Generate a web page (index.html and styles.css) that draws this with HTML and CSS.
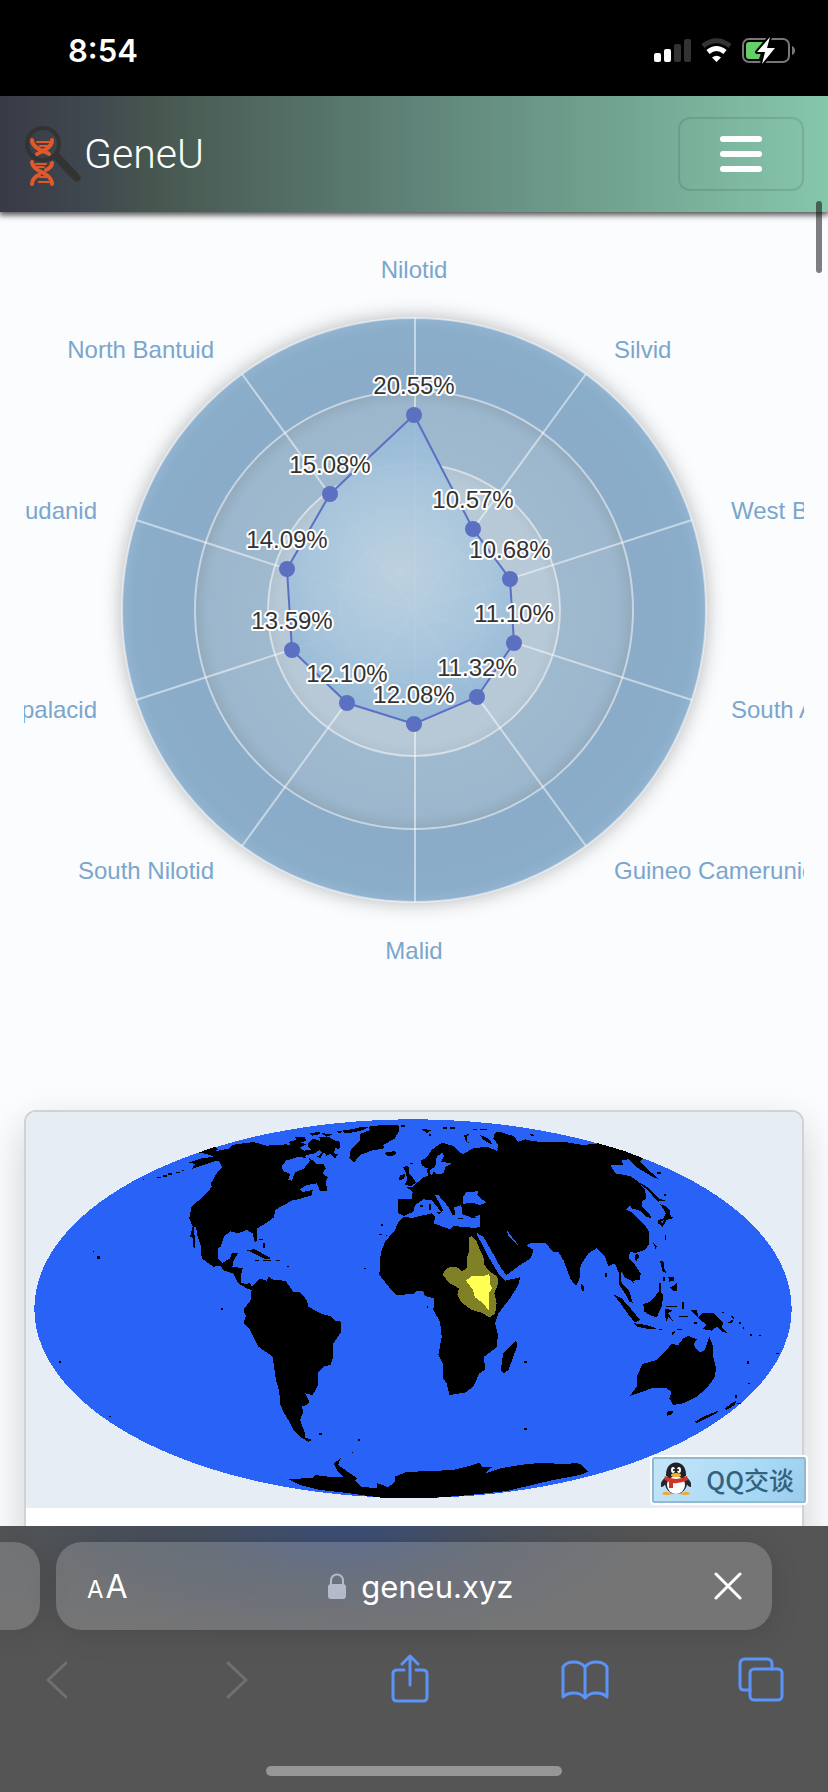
FILE: index.html
```
<!DOCTYPE html>
<html lang="en">
<head>
  <meta charset="UTF-8">
  <meta name="viewport" content="width=device-width, initial-scale=1.0">
  <title>GeneU</title>
  <link rel="stylesheet" href="styles.css">
</head>
<body>
  <div class="status">
    <span class="time">8:54</span>
    <svg class="status-icons" width="144" height="32" viewBox="0 0 144 32">
      <rect x="1" y="20" width="7" height="9" rx="2" fill="#fff"/>
      <rect x="11" y="16" width="7" height="13" rx="2" fill="#fff"/>
      <rect x="21" y="11" width="7" height="18" rx="2" fill="#333"/>
      <rect x="31" y="6" width="7" height="23" rx="2" fill="#333"/>
      <g fill="none" stroke-width="5">
        <path d="M50 13 Q63.500 2.500 77 13" stroke="#333"/>
        <path d="M55 19 Q63.500 12 72 19" stroke="#fff"/>
      </g>
      <path d="M59 24.500 Q63.500 21 68 24.500 L63.500 29Z" fill="#fff"/>
      <rect x="90" y="6" width="46" height="23" rx="6" fill="none" stroke="#777" stroke-width="2"/>
      <path d="M139 13 Q142 14 142 17.500 Q142 21 139 22Z" fill="#777"/>
      <path d="M96 9 H111 L103 20 H108 L106 26 H96 Q93 26 93 23 V12 Q93 9 96 9Z" fill="#65ce66"/>
      <path d="M117 4 L104 19 H112 L109 31 L122 15 H114Z" fill="#fff" stroke="#000" stroke-width="4" paint-order="stroke" stroke-linejoin="round"/>
    </svg>
  </div>

  <header class="navbar">
    <a class="brand" href="#">
      <svg width="58" height="64" viewBox="0 0 58 64">
        <g fill="none" stroke="#e0592b" stroke-width="4" stroke-linecap="round">
          <path d="M8 18 C8 28 25 30 25 32 M28 18 C28 27 17 29 13 32"/>
          <path d="M13 20 H27 M16 24 H24" stroke-width="2"/>
          <path d="M8 40 C9 51 28 50 28 62 M28 41 C28 45 24 47 22 48 M8 62 C8 57 12 54 15 53"/>
          <path d="M12 42 H22 M13 45 H20 M16 55 H23 M15 60 H25" stroke-width="2"/>
        </g>
        <circle cx="19" cy="22" r="16" fill="none" stroke="#333" stroke-width="4"/>
        <path d="M31 33 L52 55" stroke="#333" stroke-width="8"/>
        <path d="M51 54 L53 56" stroke="#333" stroke-width="7" stroke-linecap="round"/>
      </svg>
      <span>GeneU</span>
    </a>
    <button class="toggler" type="button" aria-label="Menu"><i></i><i></i><i></i></button>
  </header>

  <main class="content">
    <svg class="radar" viewBox="0 0 780 800">
      <defs>
        <radialGradient id="rings" gradientUnits="userSpaceOnUse" cx="390" cy="398" r="292">
          <stop offset="0" stop-color="#b9c9d8"/>
          <stop offset=".46" stop-color="#b7c8d7"/>
          <stop offset=".5" stop-color="#b0c1d0"/>
          <stop offset=".5" stop-color="#9fb9ce"/>
          <stop offset=".7" stop-color="#9cb7cd"/>
          <stop offset=".75" stop-color="#92aabd"/>
          <stop offset=".75" stop-color="#8bacc9"/>
          <stop offset=".96" stop-color="#8aadca"/>
          <stop offset="1" stop-color="#93b4d1"/>
        </radialGradient>
        <radialGradient id="area" gradientUnits="userSpaceOnUse" cx="376" cy="358" r="170">
          <stop offset="0" stop-color="#bed2e0"/>
          <stop offset=".5" stop-color="#a8c6dd"/>
          <stop offset="1" stop-color="#8fb4d4"/>
        </radialGradient>
      </defs>
      <circle class="disc" cx="390" cy="398" r="292" fill="url(#rings)"/>
      <g class="grid">
        <circle cx="390" cy="398" r="292"/>
        <circle cx="390" cy="398" r="219"/>
        <circle cx="390" cy="398" r="146"/>
        <circle cx="390" cy="398" r="73"/>
        <path d="M391 106V690 M218 162L562 634 M562 162L218 634 M112 308L668 488 M668 308L112 488"/>
      </g>
      <polygon points="390,203 306,282 263,357 268,438 323,491 390,512 453,485 490,431 486,367 449,317" fill="url(#area)" fill-opacity=".93" stroke="#5b70c4" stroke-width="2"/>
      <g fill="#5b70c0">
        <circle cx="390" cy="203" r="8"/>
        <circle cx="306" cy="282" r="8"/>
        <circle cx="263" cy="357" r="8"/>
        <circle cx="268" cy="438" r="8"/>
        <circle cx="323" cy="491" r="8"/>
        <circle cx="390" cy="512" r="8"/>
        <circle cx="453" cy="485" r="8"/>
        <circle cx="490" cy="431" r="8"/>
        <circle cx="486" cy="367" r="8"/>
        <circle cx="449" cy="317" r="8"/>
      </g>
      <g class="values">
        <text x="390" y="182">20.55%</text>
        <text x="306" y="261">15.08%</text>
        <text x="263" y="336">14.09%</text>
        <text x="268" y="417">13.59%</text>
        <text x="323" y="470">12.10%</text>
        <text x="390" y="491">12.08%</text>
        <text x="453" y="464">11.32%</text>
        <text x="490" y="410">11.10%</text>
        <text x="486" y="346">10.68%</text>
        <text x="449" y="296">10.57%</text>
      </g>
      <g class="names">
        <text x="390" y="66" class="mid">Nilotid</text>
        <text x="190" y="146" class="end">North Bantuid</text>
        <text x="73" y="307" class="end">Sudanid</text>
        <text x="73" y="506" class="end">palacid</text>
        <text x="190" y="667" class="end">South Nilotid</text>
        <text x="390" y="747" class="mid">Malid</text>
        <text x="590" y="667">Guineo Camerunid</text>
        <text x="707" y="506">South Africid</text>
        <text x="707" y="307">West Bantuid</text>
        <text x="590" y="146">Silvid</text>
      </g>
    </svg>

    <div class="card">
      <svg class="map" viewBox="78 66 2328 1188">
        <ellipse cx="1239" cy="656" rx="1136" ry="568" fill="#2962f6"/>
        <!-- Americas -->
        <path d="M595,188 645,170 655,178 640,185 685,176 700,164 760,156 800,167 860,163 900,172 920,190 915,202 930,205 950,222 970,222 977,236 968,250 983,262 978,275 981,303 960,302 950,280 920,285 900,298 908,306 938,300 935,316 905,325 875,332 825,360 822,382 800,398 772,415 772,450 765,458 758,430 740,420 715,430 690,424 672,440 662,470 654,475 655,508 668,518 690,505 695,490 713,490 700,515 697,530 728,535 722,560 722,578 740,583 750,578 755,590 780,565 800,572 805,560 820,570 855,572 870,590 880,607 900,606 920,630 925,650 960,670 995,680 1005,692 1022,695 1022,728 1000,760 1000,800 992,825 970,830 955,848 955,885 938,915 915,910 928,935 920,945 905,950 910,965 900,990 915,1030 915,1042 938,1050 925,1055 900,1040 880,1020 865,990 850,965 840,940 838,905 828,870 818,800 775,770 750,720 730,700 738,678 730,660 752,630 755,600 738,594 715,580 700,550 672,542 662,528 640,530 605,505 602,465 592,435 588,412 582,412 586,475 578,470 580,445 570,440 578,410 568,385 575,350 620,310 635,290 633,280 650,250 668,232 655,212 640,215 600,228 575,237 585,222 565,218 600,206 640,200 622,192Z"/>
        <path d="M845,230 858,212 890,202 925,203 930,212 912,235 885,248 875,272 865,270 870,252 850,243Z" fill="#2962f6"/>
        <path d="M735,480 765,478 790,492 815,505 795,507 770,495 750,485Z M765,510h12v3h-12Z M790,510h22v4h-22Z M828,510h12v4h-12Z M776,447h12v3h-12Z M790,460h4v14h-4Z M292,499h8v8h-8Z M278,482h5v4h-5Z M664,653h5v7h-5Z M178,813h5v6h-5Z M328,978h5v4h-5Z M470,260h12v3h-12Z M490,256h10v4h-10Z M505,250h10v4h-10Z M527,245h12v4h-12Z M545,241h8v3h-8Z M428,266h5v4h-5Z M862,527h4v5h-4Z M956,1028 970,1032 958,1036Z M1073,1046h7v7h-7Z M1055,1086h4v3h-4Z"/>
        <g transform="translate(840)">
          <!-- Arctic islands, Greenland, Iceland -->
          <path d="M28,155 50,150 45,142 75,140 78,152 62,158 80,162 60,172 30,166Z M85,160 100,146 120,152 118,140 150,142 160,150 180,155 178,180 168,172 160,190 175,192 165,205 150,192 140,198 132,186 120,205 112,200 125,188 118,180 105,190 80,195 75,180 95,180 85,170Z M90,130 120,125 118,133 95,137Z M125,130 160,132 140,140Z M165,122 185,124 180,130Z M185,122 215,118 240,112 265,112 250,120 215,128 195,130Z M10,170 60,175 70,195 30,205 0,200Z"/>
          <path d="M208,205 212,180 240,150 240,132 270,120 265,110 300,106 355,104 357,122 345,145 310,165 312,175 275,182 240,195 222,218Z M315,188 345,183 350,192 330,200 318,195Z M425,117 455,120 440,130Z M362,106h12v5h-12Z M490,112h12v4h-12Z M510,112h14v4h-14Z M580,116h12v4h-12Z M600,118h20v3h-20Z M446,132h6v6h-6Z"/>
          <path d="M552,135 570,132 560,140 562,155 570,160 558,156Z M600,135 625,145 640,165 625,158 608,148Z M750,133 780,135 755,137Z M370,232 385,226 388,250 400,265 408,278 395,287 372,286 382,270 378,250Z M355,270 362,255 376,252 371,268Z M390,218h8v5h-8Z"/>
          <!-- Eurasia -->
          <path d="M355,328 395,326 398,305 380,292 400,290 412,278 430,262 445,258 440,240 448,232 440,235 425,225 422,212 440,202 455,180 485,158 520,168 540,188 550,192 580,175 620,170 650,182 655,165 640,145 645,128 660,126 700,138 715,155 735,148 760,154 800,156 860,157 910,165 955,160 1030,182 1090,205 1080,215 1100,235 1138,268 1120,262 1075,235 1060,222 1045,208 1025,212 1030,224 992,225 1005,250 1050,258 1075,275 1095,300 1100,325 1085,335 1085,350 1110,375 1116,385 1100,380 1080,362 1055,355 1050,345 1038,358 1060,370 1072,385 1095,405 1108,428 1108,460 1095,480 1070,488 1050,487 1045,505 1065,525 1082,550 1080,570 1060,572 1062,582 1055,572 1035,562 1025,545 1022,548 1025,580 1048,603 1058,638 1048,635 1032,605 1018,585 1017,550 1005,520 985,528 975,500 950,475 925,490 902,525 898,570 888,588 872,568 850,510 835,485 820,485 795,458 750,460 738,466 715,465 695,440 680,420 686,440 712,465 735,462 760,480 752,505 720,525 680,555 665,538 640,492 610,440 592,430 590,412 600,412 600,375 575,382 545,372 545,350 520,350 530,372 518,375 505,350 475,315 465,315 490,360 485,368 455,330 430,328 405,345 400,365 372,378 355,370Z"/>
          <path d="M452,238 466,230 470,200 488,188 492,200 483,215 515,220 495,232 492,250 470,252 462,245 455,256 448,250Z M548,320 560,306 595,304 592,315 618,338 600,345 575,338 548,342Z M522,352 545,345 540,360 550,380 530,385 526,370Z M625,165 655,180 640,162Z" fill="#2962f6"/>
          <path d="M470,365 485,367 478,374Z M446,343h8v16h-8Z M535,384h14v3h-14Z M573,380h14v4h-14Z M420,346h8v4h-8Z"/>
          <!-- Africa -->
          <path d="M370,382 400,383 455,370 465,380 462,400 510,418 520,408 565,412 592,415 590,434 605,460 625,500 655,550 675,572 720,562 715,585 690,625 655,670 645,700 653,730 652,770 612,800 615,840 598,850 580,890 555,908 508,915 500,880 490,865 488,820 475,795 485,740 480,695 460,660 463,625 435,618 430,603 408,603 400,612 350,615 330,595 298,555 302,490 315,455 345,420 355,395Z M708,750 712,768 700,800 685,840 670,850 662,840 670,790 690,770Z M733,1014h7v7h-7Z M733,813h7v5h-7Z M440,648h4v5h-4Z M297,432h8v3h-8Z M304,403h4v4h-4Z M253,533h5v5h-5Z M318,435h4v4h-4Z"/>
          <path d="M575,438 590,455 600,480 610,500 613,525 630,545 652,560 655,580 643,610 650,640 645,672 628,682 605,668 575,660 545,638 532,615 537,595 510,580 487,555 495,540 510,530 535,533 545,545 560,535 562,500 568,480 568,442Z" fill="#808026"/>
          <path d="M558,572 575,558 612,558 628,552 630,580 636,595 628,608 628,665 612,642 585,622 578,598Z" fill="#ffff54"/>
          <!-- Antarctica -->
          <path d="M26,1168 100,1163 105,1155 160,1162 190,1160 172,1143 162,1120 182,1105 174,1125 232,1165 225,1172 245,1190 290,1195 292,1180 310,1186 325,1192 345,1175 345,1160 380,1146 520,1140 560,1130 600,1118 605,1130 638,1130 612,1152 660,1135 740,1122 800,1118 860,1125 885,1118 925,1145 840,1165 680,1203 560,1216 450,1224 310,1224 210,1210 120,1200 60,1185Z"/>
        </g>
        <g transform="translate(1650)">
          <path d="M55,1122 80,1118 95,1125 115,1145 90,1155 0,1172V1122Z"/>
          <!-- Australia, New Zealand -->
          <path d="M240,918 260,890 262,855 278,822 320,810 345,785 365,762 385,765 400,745 415,738 440,748 430,765 450,788 465,780 478,740 490,770 488,795 498,835 495,860 470,895 440,920 400,940 370,945 358,925 365,905 350,895 305,895Z M350,965 372,962 362,975 350,977Z M435,995 460,980 510,960 500,970 470,985 440,1000Z M525,955 545,940 558,932 555,945 530,960Z M562,938h10v5h-10Z M556,915h5v8h-5Z"/>
          <!-- Indonesia and New Guinea -->
          <path d="M420,660 440,660 445,680 460,668 490,670 520,700 515,712 535,730 515,725 500,710 485,722 457,717 470,705 440,680Z M280,642 300,635 330,602 340,615 335,650 320,682 300,675 282,665Z M190,612 215,625 250,665 270,690 255,697 240,680 215,645Z M253,700 290,705 320,715 300,718 260,710Z M325,716 345,716 330,720Z M348,648h32v3h-32Z M345,657 368,660 355,670 368,692 355,682 348,695 345,675Z M397,637h5v20h-5Z M365,728 380,720 368,735Z M388,678h25v4h-25Z M380,716h15v3h-15Z M520,695 540,695 552,685 545,700Z M540,674 554,684 550,687Z M568,697h4v5h-4Z M578,708 584,714 580,716Z M600,733h6v5h-6Z M627,735h5v4h-5Z M590,812h8v10h-8Z M595,878h5v4h-5Z M678,788h8v5h-8Z M517,666h5v4h-5Z M433,697h8v5h-8Z"/>
          <!-- Philippines, Japan, small islands -->
          <path d="M330,512 342,515 342,535 350,550 338,545Z M355,560 372,562 372,572 358,575Z M360,592 372,588 382,578 382,605 370,602Z M340,560h4v12h-4Z M328,580h4v22h-4Z M310,460 320,470 318,480Z M254,495 264,490 267,500 260,512 254,508Z M92,580 103,590 102,605 95,600Z M345,435h4v14h-4Z M166,550h4v12h-4Z"/>
          <path d="M330,342 345,348 360,362 362,378 372,384 350,390 338,410 324,400 325,390 340,385 348,370Z M258,272 290,290 325,325 345,332 325,335 290,298Z M343,312h5v5h-5Z M322,246h12v5h-12Z"/>
          <path d="M332,395 342,390 338,400Z" fill="#2962f6"/>
        </g>
      </svg>
      <div class="card-body"></div>
    </div>

    <div class="scroll-thumb"></div>
    <a class="qq" href="#">
      <svg width="32" height="34" viewBox="0 0 32 34">
        <path d="M7 30 Q3 29 2 32 Q6 34 13 32 M25 30 Q29 29 30 32 Q26 34 19 32" fill="#f0a92c"/>
        <path d="M6 15 Q0 19 1 25 Q4 25 6 21 M26 15 Q32 19 31 25 Q28 25 26 21" fill="#26262c"/>
        <ellipse cx="16" cy="21" rx="11" ry="11" fill="#26262c"/>
        <ellipse cx="16" cy="23" rx="9" ry="9" fill="#fff"/>
        <path d="M6 14 C5 -4 27 -4 26 14Z" fill="#202026"/>
        <ellipse cx="13" cy="8" rx="2" ry="3" fill="#fff"/>
        <ellipse cx="19" cy="8" rx="2" ry="3" fill="#fff"/>
        <circle cx="14" cy="8" r="1" fill="#000"/>
        <circle cx="18" cy="8" r="1" fill="#000"/>
        <ellipse cx="16" cy="13" rx="5" ry="2" fill="#f5b02e"/>
        <path d="M5 14 Q16 20 27 14 L28 18 Q20 22 13 21 V26 H9 V20 Q6 19 4 17Z" fill="#cf3425"/>
      </svg>
      <span>QQ交谈</span>
    </a>
  </main>

  <footer class="safari">
    <div class="tabs">
      <div class="prev-tab"></div>
      <div class="address">
        <button type="button" class="aa" aria-label="Text size"><small>A</small>A</button>
        <button type="button" class="url">
          <svg width="18" height="27" viewBox="0 0 18 27">
            <path d="M3 13V7.500a6 6 0 0 1 12 0V13" fill="none" stroke="#b5bacb" stroke-width="2"/>
            <rect y="11" width="18" height="15" rx="3" fill="#b5bacb"/>
          </svg>
          <span>geneu.xyz</span>
        </button>
        <button type="button" aria-label="Stop">
          <svg width="28" height="28" viewBox="0 0 28 28"><path d="M2 2L26 26M26 2L2 26" fill="none" stroke="#fff" stroke-width="3" stroke-linecap="round"/></svg>
        </button>
      </div>
    </div>
    <div class="toolbar">
      <button type="button" aria-label="Back" disabled>
        <svg width="60" height="50" viewBox="0 0 60 50"><path d="M39 9L21 26L39 43" stroke="#707070"/></svg>
      </button>
      <button type="button" aria-label="Forward" disabled>
        <svg width="60" height="50" viewBox="0 0 60 50"><path d="M25 9L43 26L25 43" stroke="#707070"/></svg>
      </button>
      <button type="button" aria-label="Share">
        <svg width="60" height="50" viewBox="0 0 60 50"><path d="M25 16H18Q14 16 14 20V43Q14 47 18 47H44Q48 47 48 43V20Q48 16 44 16H37M31 31V3M23 10L31 2L39 10"/></svg>
      </button>
      <button type="button" aria-label="Bookmarks">
        <svg width="60" height="50" viewBox="0 0 60 50"><path d="M31 13Q27 8 20 8Q12 8 9 13V43Q13 39 20 39Q27 39 31 44Q35 39 42 39Q49 39 53 43V13Q50 8 42 8Q35 8 31 13V43"/></svg>
      </button>
      <button type="button" aria-label="Tabs">
        <svg width="60" height="50" viewBox="0 0 60 50"><rect x="20" y="15" width="32" height="31" rx="4"/><path d="M20 36H14Q10 36 10 32V10Q10 5 15 5H37Q42 5 42 10V15"/></svg>
      </button>
    </div>
    <div class="home-bar"></div>
  </footer>
</body>
</html>
```

FILE: styles.css
```
* {
  box-sizing: border-box;
}
body {
  margin: 0;
  height: 100vh;
  display: flex;
  flex-direction: column;
  background: #fbfcfe;
  font-family: Inter, "Liberation Sans", sans-serif;
}
button {
  padding: 0;
  border: none;
  background: none;
  color: inherit;
  font-family: inherit;
}
svg {
  display: block;
}

.status {
  flex: none;
  height: 96px;
  padding: 4px 31px 0 68px;
  display: flex;
  align-items: center;
  justify-content: space-between;
  background: #000;
  color: #fff;
}
.status-icons {
  margin-bottom: 2px;
}
.time {
  font-size: 31px;
  font-weight: 600;
}

.navbar {
  flex: none;
  height: 116px;
  padding: 0 24px;
  display: flex;
  align-items: center;
  justify-content: space-between;
  background: linear-gradient(to right, #383a45, #414a50 12%, #46564f 18%, #5f8378 50%, #86c7ab);
  box-shadow: 0 2px 6px 1px rgba(0, 0, 0, 0.7);
  position: relative;
}
.brand {
  display: flex;
  align-items: center;
  gap: 2px;
  color: #fff;
  font: 300 41px/48px Roboto, sans-serif;
  text-decoration: none;
}
.toggler {
  width: 126px;
  height: 74px;
  border: 2px solid rgba(0, 0, 0, 0.1);
  border-radius: 12px;
  display: flex;
  flex-direction: column;
  align-items: center;
  justify-content: center;
  gap: 9px;
}
.toggler i {
  width: 42px;
  height: 6px;
  border-radius: 3px;
  background: #fff;
}

.content {
  flex: 1;
  min-height: 0;
  padding: 0 24px;
  position: relative;
}
.radar {
  width: 100%;
  overflow: hidden;
  font: 24px "Liberation Sans", Arial, sans-serif;
}
.disc {
  filter: drop-shadow(0 0 10px rgba(0, 0, 0, 0.3));
}
.grid {
  fill: none;
  stroke: rgba(255, 255, 255, 0.5);
  stroke-width: 2;
}
.values {
  fill: #333;
  stroke: #fff;
  stroke-width: 4;
  stroke-linejoin: round;
  paint-order: stroke;
  text-anchor: middle;
}
.names {
  fill: #7aa6cd;
}
.mid {
  text-anchor: middle;
}
.end {
  text-anchor: end;
}

.card {
  margin-top: 98px;
  border: 2px solid #d0d2d4;
  border-radius: 12px;
  background: #fff;
  box-shadow: 0 16px 40px rgba(0, 0, 0, 0.18);
}
.map {
  width: 100%;
  background: #e6edf5;
  border-radius: 10px 10px 0 0;
  shape-rendering: crispEdges;
}
.card-body {
  height: 40px;
}
.scroll-thumb {
  position: absolute;
  top: -11px;
  right: 6px;
  width: 6px;
  height: 72px;
  border-radius: 3px;
  background: rgba(0, 0, 0, 0.5);
}
.qq {
  position: absolute;
  right: 20px;
  bottom: 21px;
  width: 158px;
  height: 50px;
  padding: 0 12px 2px 8px;
  display: flex;
  align-items: center;
  justify-content: space-between;
  border: 2px solid #fff;
  border-radius: 4px;
  background: linear-gradient(120deg, #c5e5f7, #a5d8f6 70%, #9ccbea);
  box-shadow: inset 0 0 0 2px #8fbad2;
  color: #33627f;
  font: 500 25px/32px "Noto Sans CJK SC", sans-serif;
  text-decoration: none;
}

.safari {
  flex: none;
  height: 266px;
  padding-top: 16px;
  position: relative;
  overflow: hidden;
  color: #fff;
  background: radial-gradient(ellipse 300px 120px at 42% 0, #3a4e78, rgba(68, 78, 98, 0.6) 50%, rgba(85, 85, 85, 0)), radial-gradient(ellipse 260px 110px at 20% 0, #4a5058, #555);
}
.tabs {
  display: flex;
  gap: 16px;
  padding-right: 56px;
}
.prev-tab {
  width: 40px;
  height: 88px;
  border-radius: 0 26px 26px 0;
  background: rgba(255, 255, 255, 0.19);
  box-shadow: 0 4px 30px rgba(0, 0, 0, 0.12);
}
.address {
  flex: 1;
  height: 88px;
  padding: 0 30px 0 31px;
  display: flex;
  align-items: center;
  justify-content: space-between;
  border-radius: 26px;
  background: rgba(255, 255, 255, 0.19);
  box-shadow: 0 4px 30px rgba(0, 0, 0, 0.12);
}
.aa {
  font-size: 32px;
}
.aa small {
  margin-right: 2px;
  font-size: 24px;
}
.url {
  display: flex;
  align-items: center;
  gap: 15px;
  font-size: 31px;
}
.toolbar {
  display: flex;
  justify-content: space-between;
  margin-top: 24px;
  padding: 0 38px 0 27px;
}
.toolbar svg {
  fill: none;
  stroke: #5b93f9;
  stroke-width: 3;
  stroke-linecap: round;
  stroke-linejoin: round;
}
.home-bar {
  width: 296px;
  height: 10px;
  margin: 62px auto 0;
  border-radius: 5px;
  background: #969696;
}
```
